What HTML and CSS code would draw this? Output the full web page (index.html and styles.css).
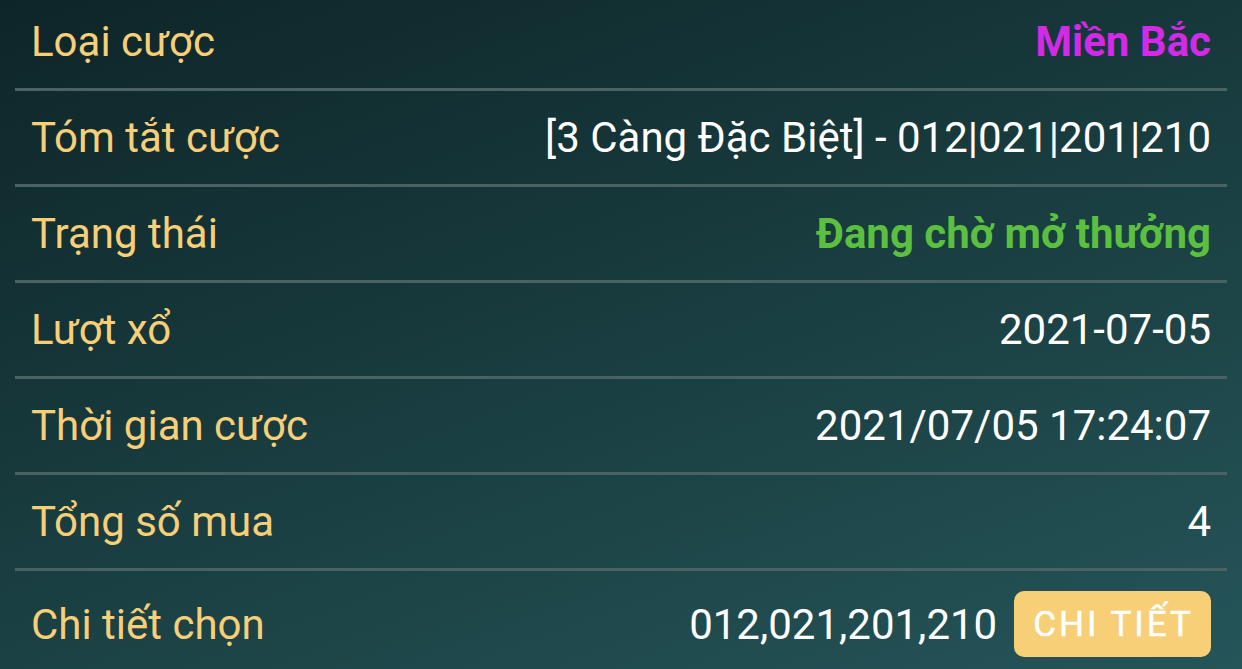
FILE: index.html
```html
<!DOCTYPE html>
<html lang="vi">

<head>
    <meta charset="UTF-8">
    <meta name="viewport" content="width=device-width, initial-scale=1.0">
    <title>Chi tiết cược</title>
    <link rel="stylesheet" href="styles.css">
</head>

<body>

    <div class="detail">
        <div class="row">
            <span class="label">Loại cược</span>
            <span class="value value-type">Miền Bắc</span>
        </div>
        <div class="row">
            <span class="label">Tóm tắt cược</span>
            <span class="value">[3 Càng Đặc Biệt] - 012|021|201|210</span>
        </div>
        <div class="row">
            <span class="label">Trạng thái</span>
            <span class="value value-status">Đang chờ mở thưởng</span>
        </div>
        <div class="row">
            <span class="label">Lượt xổ</span>
            <span class="value">2021-07-05</span>
        </div>
        <div class="row">
            <span class="label">Thời gian cược</span>
            <span class="value">2021/07/05 17:24:07</span>
        </div>
        <div class="row">
            <span class="label">Tổng số mua</span>
            <span class="value">4</span>
        </div>
        <div class="row">
            <span class="label">Chi tiết chọn</span>
            <span class="value">
                012,021,201,210
                <button class="btn-detail">CHI TIẾT</button>
            </span>
        </div>
    </div>

</body>

</html>
```

FILE: styles.css
```css
html,
body {
    margin: 0;
    height: 100%;
    overflow: hidden;
}

body {
    background: linear-gradient(160deg, #0e2528 0%, #1a3f42 55%, #255559 100%);
    font-family: Roboto, "Noto Sans", sans-serif;
    font-size: 42px;
    color: #ffffff;
}

.detail {
    margin: -5px 15px 0 15px;
}

.row {
    display: flex;
    align-items: center;
    justify-content: space-between;
    height: 93px;
    padding: 0 16px;
    border-bottom: 3px solid #4b6265;
}

.row:last-child {
    height: 106px;
    border-bottom: none;
}

.label {
    color: #f6cf78;
}

.value {
    display: flex;
    align-items: center;
    gap: 17px;
}

.value-type {
    color: #d22ae6;
    font-weight: 700;
}

.value-status {
    color: #5bbf40;
    font-weight: 700;
}

.btn-detail {
    height: 66px;
    padding: 0 17px 0 19px;
    border: none;
    border-radius: 10px;
    background-color: #f6cf76;
    color: #ffffff;
    font-family: Roboto, "Noto Sans", sans-serif;
    font-size: 35px;
    font-weight: 400;
    letter-spacing: 3px;
    -webkit-text-stroke: 0.5px #ffffff;
}
```
